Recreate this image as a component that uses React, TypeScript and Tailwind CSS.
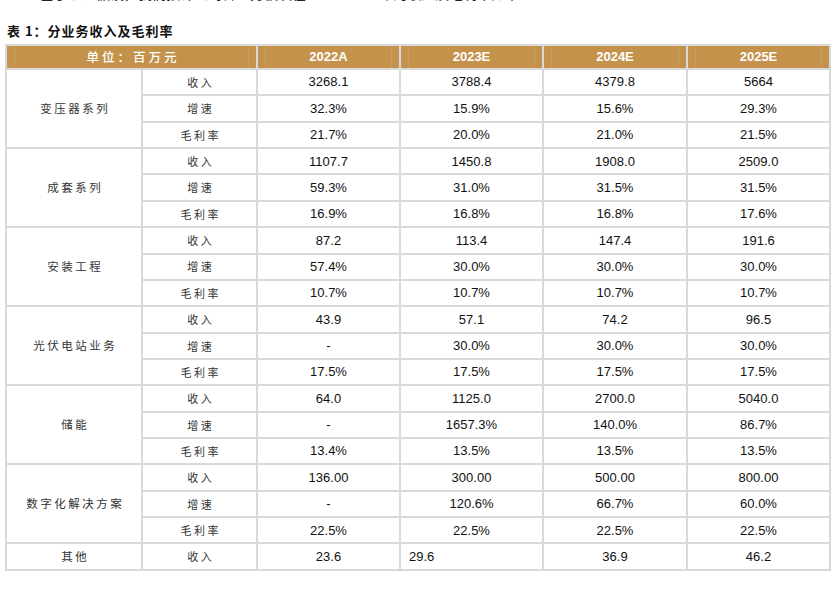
const years = ['2022A', '2023E', '2024E', '2025E'];

type Group = {
  name: string;
  rows: { label: string; values: string[] }[];
};

const groups: Group[] = [
  {
    name: '变压器系列',
    rows: [
      { label: '收入', values: ['3268.1', '3788.4', '4379.8', '5664'] },
      { label: '增速', values: ['32.3%', '15.9%', '15.6%', '29.3%'] },
      { label: '毛利率', values: ['21.7%', '20.0%', '21.0%', '21.5%'] },
    ],
  },
  {
    name: '成套系列',
    rows: [
      { label: '收入', values: ['1107.7', '1450.8', '1908.0', '2509.0'] },
      { label: '增速', values: ['59.3%', '31.0%', '31.5%', '31.5%'] },
      { label: '毛利率', values: ['16.9%', '16.8%', '16.8%', '17.6%'] },
    ],
  },
  {
    name: '安装工程',
    rows: [
      { label: '收入', values: ['87.2', '113.4', '147.4', '191.6'] },
      { label: '增速', values: ['57.4%', '30.0%', '30.0%', '30.0%'] },
      { label: '毛利率', values: ['10.7%', '10.7%', '10.7%', '10.7%'] },
    ],
  },
  {
    name: '光伏电站业务',
    rows: [
      { label: '收入', values: ['43.9', '57.1', '74.2', '96.5'] },
      { label: '增速', values: ['-', '30.0%', '30.0%', '30.0%'] },
      { label: '毛利率', values: ['17.5%', '17.5%', '17.5%', '17.5%'] },
    ],
  },
  {
    name: '储能',
    rows: [
      { label: '收入', values: ['64.0', '1125.0', '2700.0', '5040.0'] },
      { label: '增速', values: ['-', '1657.3%', '140.0%', '86.7%'] },
      { label: '毛利率', values: ['13.4%', '13.5%', '13.5%', '13.5%'] },
    ],
  },
  {
    name: '数字化解决方案',
    rows: [
      { label: '收入', values: ['136.00', '300.00', '500.00', '800.00'] },
      { label: '增速', values: ['-', '120.6%', '66.7%', '60.0%'] },
      { label: '毛利率', values: ['22.5%', '22.5%', '22.5%', '22.5%'] },
    ],
  },
];

const cjk = "font-['Noto_Sans_CJK_SC',sans-serif]";
const num = "font-['Liberation_Sans',Arial,sans-serif]";

const HeaderCell = ({ children, className = '' }: { children: React.ReactNode; className?: string }) => (
  <div className={`bg-[#c4924a] px-[7px] ${className}`}>
    <div className="flex h-full items-center justify-center border-x border-[#cb9d5c] text-white">
      {children}
    </div>
  </div>
);

const Value = ({ v, left = false }: { v: string; left?: boolean }) => (
  <div
    className={`flex items-center bg-white text-[13px] text-[#111] ${num} ${
      left ? 'justify-start pl-[8px]' : 'justify-center'
    }`}
  >
    {v}
  </div>
);

const Label = ({ text }: { text: string }) => (
  <div
    className={`flex items-center justify-center bg-white pl-[2.5px] text-[11px] tracking-[2.5px] text-[#333] ${cjk}`}
  >
    {text}
  </div>
);

export default function App() {
  return (
    <div className="h-[591px] w-[837px] overflow-hidden bg-white">
      <p className={`-mt-[17px] h-[20px] pl-[40px] text-[14px] leading-[20px] text-[#222] ${cjk}`}>
        基于以上假设，我们预计公司各业务板块在 2023-2025 年的收入及毛利率如下：
      </p>
      <h2 className={`mt-[18px] pl-[7px] text-[13px] font-bold leading-[20px] tracking-[1px] text-[#111] ${cjk}`}>
        表 1：分业务收入及毛利率
      </h2>
      <div className="ml-[5px] mt-[3px] grid w-[826px] grid-cols-[134px_113px_141px_141px_142px_141px] grid-rows-[22px_repeat(19,24.37px)] gap-[2px] border-2 border-[#d9d9d9] bg-[#d9d9d9]">
        <HeaderCell className="col-span-2">
          <span className={`pl-[3px] text-[12.5px] font-medium tracking-[3px] ${cjk}`}>单位：百万元</span>
        </HeaderCell>
        {years.map((y) => (
          <HeaderCell key={y}>
            <span className={`text-[13px] font-bold ${num}`}>{y}</span>
          </HeaderCell>
        ))}

        {groups.map((g) => (
          <div key={g.name} className="contents">
            <div
              className={`row-span-3 flex items-center justify-center bg-white pl-[2.5px] text-[11.5px] tracking-[2.5px] text-[#333] ${cjk}`}
            >
              {g.name}
            </div>
            {g.rows.map((r) => (
              <div key={r.label} className="contents">
                <Label text={r.label} />
                {r.values.map((v, i) => (
                  <Value key={i} v={v} />
                ))}
              </div>
            ))}
          </div>
        ))}

        <div
          className={`flex items-center justify-center bg-white pl-[2.5px] text-[11.5px] tracking-[2.5px] text-[#333] ${cjk}`}
        >
          其他
        </div>
        <Label text="收入" />
        <Value v="23.6" />
        <Value v="29.6" left />
        <Value v="36.9" />
        <Value v="46.2" />
      </div>
    </div>
  );
}
